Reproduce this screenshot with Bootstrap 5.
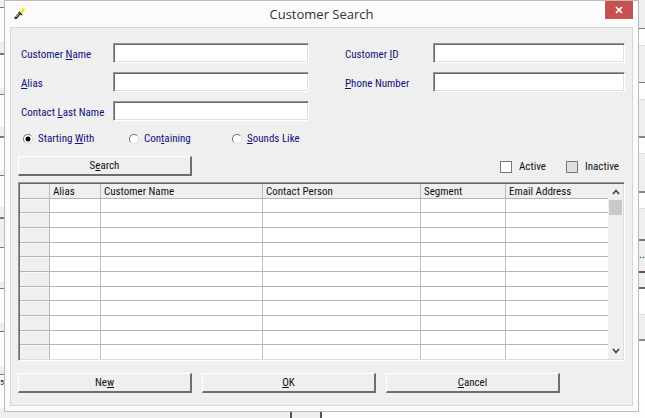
<!DOCTYPE html>
<html lang="en">
<head>
<meta charset="utf-8">
<meta name="viewport" content="width=device-width, initial-scale=1">
<title>Customer Search</title>
<link href="https://cdn.jsdelivr.net/npm/bootstrap@5.3.0/dist/css/bootstrap.min.css" rel="stylesheet">
<style>
:root{--face:#efefef;--navy:#10107c;--dark:#6e6e6e}
body{background:#fdfdfd;color:#111;font:11px/14px "Liberation Sans Narrow","Roboto Condensed","Liberation Sans",sans-serif}
/* edges of the form lying behind the dialog */
.edge-left{width:4px;background:linear-gradient(var(--face) 7px,#777 7px 8px,#fdfdfd 8px 41px,var(--face) 41px 53px,#777 53px 55px,#fdfdfd 55px 88px,var(--face) 88px 94px,#777 94px 95px,#fdfdfd 95px 127px,var(--face) 127px 136px,#777 136px 138px,#fdfdfd 138px 170px,var(--face) 170px 175px,#777 175px 176px,#fdfdfd 176px 207px,var(--face) 207px 217px,#777 217px 219px,var(--face) 219px 247px,#777 247px 248px,#fdfdfd 248px 281px,var(--face) 281px 288px,#777 288px 289px,#fdfdfd 289px 323px,var(--face) 323px 331px,#777 331px 332px,#fdfdfd 332px 366px,var(--face) 366px 374px,#777 374px 375px,#fdfdfd 375px 408px,var(--face) 408px)}
.edge-right{width:6px;background:linear-gradient(var(--face) 28px,#777 28px 29px,#fdfdfd 29px 45px,#ddd 45px 46px,var(--face) 46px 82px,#777 82px 83px,#fdfdfd 83px 99px,#ddd 99px 100px,var(--face) 100px 136px,#888 136px 138px,#fdfdfd 138px 153px,#ddd 153px 154px,var(--face) 154px 191px,#888 191px 193px,#fdfdfd 193px 208px,#ddd 208px 209px,var(--face) 209px 239px,#777 239px 241px,var(--face) 241px 271px,#555 271px 273px,var(--face) 273px 287px,#666 287px 289px,#fdfdfd 289px 314px,#ddd 314px 315px,var(--face) 315px 339px,#888 339px 341px,#fdfdfd 341px)}
.edge-text{line-height:12px;white-space:nowrap}
.edge-left .edge-text{margin-top:377px;font-size:8px}
.edge-right .edge-text{margin-top:249px;font-size:11px}
.edge-bottom{height:6px}
.edge-bottom .pane{background:var(--face);border-right:2px solid #555}
.edge-bottom .wide{flex:0 0 292px}
.edge-bottom .thin{flex:0 0 30px}
.dialog{background:#fbfbfb;border:1px solid #bbb;padding:0 5px 5px}
.title-row{height:26px}
.title-row h1{font:13px/26px "Open Sans","Noto Sans",sans-serif;color:#333}
.title-row .side{width:30px}
.torch{width:14px;height:14px;margin:0 0 0 3px}
.close-box{width:28px;height:18px;background:#c75050;border:0}
.client{background:var(--face);border:1px solid #d6d6d6;padding:15px 7px 12px}
.fields{padding-left:3px;column-gap:36px}
.fields .left{flex:288 1 0;row-gap:9px}
.fields .right{flex:280 1 0;row-gap:9px}
.left label.caption{width:92px}
.right label.caption{width:88px}
.caption,.radio label{color:var(--navy);white-space:nowrap}
.fields .caption{padding-top:5px}
.sunk{height:20px;min-width:0;border:1px solid #999;border-right-color:#fff;border-bottom-color:#fff;background:#fff;box-shadow:inset 1px 1px #666,inset -1px -1px #e0e0e0;outline-offset:-1px}
.radios{margin:10px 0 9px 5px;height:16px}
.radio{gap:5px;width:106px}
.radio:nth-child(2){width:103px}
.radio input{appearance:none;width:10px;height:10px;margin:0;border:1px solid #777;border-right-color:#ddd;border-bottom-color:#ddd;border-radius:50%;background:#fff}
.radio input:checked{background:radial-gradient(circle,#000 2px,#fff 3px)}
.raised{width:174px;height:20px;padding:0;background:var(--face);border:1px solid #fff;border-right:2px solid var(--dark);border-bottom:2px solid var(--dark);color:#111;line-height:16px}
.checks{gap:20px;padding:2px 6px 0 0}
.checks>div{gap:7px}
.checks input{appearance:none;width:12px;height:12px;margin:0;border:1px solid #777;background:#fff}
.checks .off{background:#dedede}
.results{margin-top:6px;border:1px solid #999;border-right-color:#fff;border-bottom-color:#fff;box-shadow:inset 1px 1px #666,inset -1px -1px #ddd;padding:1px}
.sheet{table-layout:fixed;width:100%;border-collapse:separate;border-spacing:0;background:#fff}
.sheet th,.sheet td{padding:0;border-right:1px solid #bbb;border-bottom:1px solid #b4b4b4}
.sheet thead th{height:15px;padding:1px 0 0 3px;line-height:13px;font-weight:400;background:var(--face);white-space:nowrap}
.sheet tbody th{background:var(--face);box-shadow:inset 1px 1px #fafafa}
.sheet tbody tr{height:15px}
.sheet tbody tr:nth-child(3n+1),.sheet tbody tr:last-child{height:14px}
.sheet tr>:last-child{border-right:0}
.sheet tbody tr:last-child>*{border-bottom:0}
.c1{width:30px}.c2{width:51px}.c3{width:162px}.c5{width:85px}.c6{width:102px}
.scroller{width:15px;background:var(--face)}
.scroller button{height:16px;width:15px;border:0;padding:0;background:none;line-height:0}
.thumb{height:15px;width:13px;background:#c9c9c9}
.actions{margin-top:12px;gap:10px}
</style>
<script src="https://cdn.jsdelivr.net/npm/bootstrap@5.3.0/dist/js/bootstrap.bundle.min.js"></script>
</head>
<body>
<div class="d-flex">
  <div class="edge-left flex-shrink-0"><div class="edge-text">5</div></div>
  <main class="dialog flex-grow-1">
    <header class="title-row d-flex justify-content-between">
      <div class="side">
        <svg class="torch d-block mt-1" viewBox="0 0 14 14" aria-hidden="true"><path d="M2 14 7 8" stroke="#333" stroke-width="2.6"/><path d="M3 12 7 8" stroke="#b5b5b5" stroke-width="1"/><path d="M6 7 9 10" stroke="#222" stroke-width="1.6"/><path d="M7 6 10 3 12 4 11 7 9 9Z" fill="#f4ee1c"/><path d="M10 3 12 2M11 5 13 4" stroke="#f8f23a" stroke-width="1"/></svg>
      </div>
      <h1 class="m-0">Customer Search</h1>
      <div class="side text-end"><button class="close-box p-0 d-inline-flex align-items-center justify-content-center align-top" aria-label="Close"><svg width="8" height="8" viewBox="0 0 8 8"><path d="M1 1 7 7M7 1 1 7" stroke="#fff" stroke-width="1.7"/></svg></button></div>
    </header>
    <form class="client">
      <div class="fields d-flex align-items-start">
        <div class="left d-flex flex-column">
          <div class="d-flex"><label class="caption" for="name">Customer <u>N</u>ame</label><input class="sunk flex-grow-1" id="name"></div>
          <div class="d-flex"><label class="caption" for="alias"><u>A</u>lias</label><input class="sunk flex-grow-1" id="alias"></div>
          <div class="d-flex"><label class="caption" for="last">Contact <u>L</u>ast Name</label><input class="sunk flex-grow-1" id="last"></div>
        </div>
        <div class="right d-flex flex-column">
          <div class="d-flex"><label class="caption" for="cid">Customer <u>I</u>D</label><input class="sunk flex-grow-1" id="cid"></div>
          <div class="d-flex"><label class="caption" for="phone"><u>P</u>hone Number</label><input class="sunk flex-grow-1" id="phone"></div>
        </div>
      </div>
      <div class="radios d-flex">
        <div class="radio d-flex align-items-center"><input type="radio" name="match" id="m1" checked><label for="m1">Starting <u>W</u>ith</label></div>
        <div class="radio d-flex align-items-center"><input type="radio" name="match" id="m2"><label for="m2">Con<u>t</u>aining</label></div>
        <div class="radio d-flex align-items-center"><input type="radio" name="match" id="m3"><label for="m3"><u>S</u>ounds Like</label></div>
      </div>
      <div class="d-flex justify-content-between">
        <button type="button" class="raised">S<u>e</u>arch</button>
        <div class="checks d-flex">
          <div class="d-flex align-items-center"><input type="checkbox" id="active"><label for="active">Active</label></div>
          <div class="d-flex align-items-center"><input type="checkbox" class="off" id="inactive"><label for="inactive">Inactive</label></div>
        </div>
      </div>
      <div class="results d-flex">
        <div class="flex-grow-1">
          <table class="sheet">
            <colgroup><col class="c1"><col class="c2"><col class="c3"><col><col class="c5"><col class="c6"></colgroup>
            <thead><tr><th></th><th>Alias</th><th>Customer Name</th><th>Contact Person</th><th>Segment</th><th>Email Address</th></tr></thead>
            <tbody>
              <tr><th></th><td></td><td></td><td></td><td></td><td></td></tr>
              <tr><th></th><td></td><td></td><td></td><td></td><td></td></tr>
              <tr><th></th><td></td><td></td><td></td><td></td><td></td></tr>
              <tr><th></th><td></td><td></td><td></td><td></td><td></td></tr>
              <tr><th></th><td></td><td></td><td></td><td></td><td></td></tr>
              <tr><th></th><td></td><td></td><td></td><td></td><td></td></tr>
              <tr><th></th><td></td><td></td><td></td><td></td><td></td></tr>
              <tr><th></th><td></td><td></td><td></td><td></td><td></td></tr>
              <tr><th></th><td></td><td></td><td></td><td></td><td></td></tr>
              <tr><th></th><td></td><td></td><td></td><td></td><td></td></tr>
              <tr><th></th><td></td><td></td><td></td><td></td><td></td></tr>
            </tbody>
          </table>
        </div>
        <div class="scroller d-flex flex-column align-items-center flex-shrink-0">
          <button type="button" aria-label="Scroll up"><svg width="8" height="6" viewBox="0 0 8 6"><path d="M1 5 4 1.500 7 5" fill="none" stroke="#444" stroke-width="1.700"/></svg></button>
          <div class="thumb"></div>
          <button type="button" class="mt-auto" aria-label="Scroll down"><svg width="8" height="6" viewBox="0 0 8 6"><path d="M1 1 4 4.500 7 1" fill="none" stroke="#444" stroke-width="1.700"/></svg></button>
        </div>
      </div>
      <div class="actions d-flex">
        <button type="button" class="raised">Ne<u>w</u></button>
        <button type="button" class="raised"><u>O</u>K</button>
        <button type="button" class="raised"><u>C</u>ancel</button>
      </div>
    </form>
  </main>
  <div class="edge-right flex-shrink-0"><div class="edge-text">..</div></div>
</div>
<div class="edge-bottom d-flex"><div class="pane wide"></div><div class="pane thin"></div></div>
</body>
</html>
